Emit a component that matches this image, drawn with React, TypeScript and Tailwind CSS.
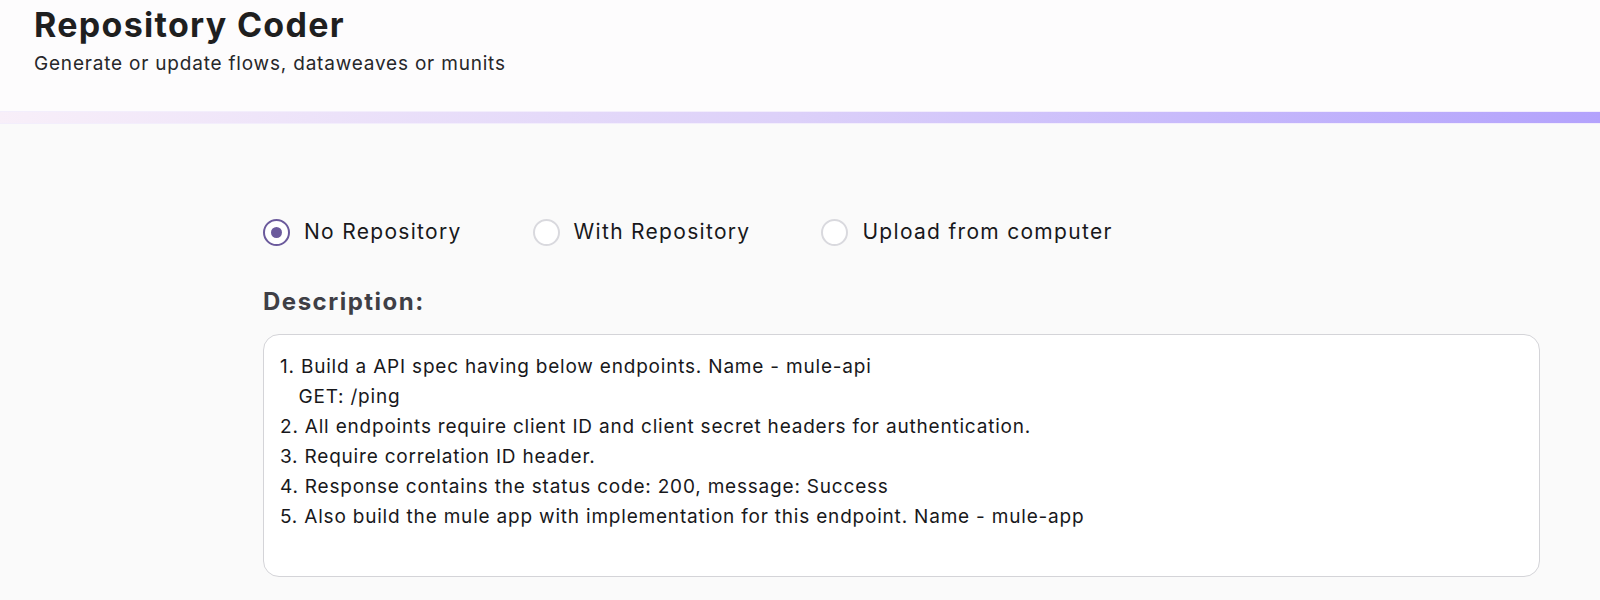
import React, { useState } from 'react';

const options = [
  { id: 'none', label: 'No Repository' },
  { id: 'repo', label: 'With Repository' },
  { id: 'upload', label: 'Upload from computer' },
];

const defaultDescription = `1. Build a API spec having below endpoints. Name - mule-api
   GET: /ping
2. All endpoints require client ID and client secret headers for authentication.
3. Require correlation ID header.
4. Response contains the status code: 200, message: Success
5. Also build the mule app with implementation for this endpoint. Name - mule-app`;

const App = () => {
  const [mode, setMode] = useState('none');
  const [description, setDescription] = useState(defaultDescription);

  return (
    <div className="min-h-screen bg-[#fafafa] text-[#18181b] font-['Inter','Noto_Sans',sans-serif]">
      {/* Header */}
      <div className="bg-[#fdfcfd] px-[34px] pt-[2px] h-[111px]">
        <h1 className="text-[34px] leading-[45px] font-bold tracking-[1.3px] text-[#1f1f1f]">
          Repository Coder
        </h1>
        <p className="mt-[4px] text-[19px] leading-[26px] tracking-[0.8px] text-[#27272a]">
          Generate or update flows, dataweaves or munits
        </p>
      </div>
      <div className="h-[13px] bg-gradient-to-r from-[#f8eff9] via-[#dcd0f9] to-[#b3a2fc] border-y border-[#f3eefc]" />

      {/* Content */}
      <div className="pl-[263px] pr-[60px] pt-[94px]">
        <div className="flex items-center gap-[71px]">
          {options.map((opt) => {
            const active = mode === opt.id;
            return (
              <label
                key={opt.id}
                className="flex items-center gap-[14px] cursor-pointer"
                onClick={() => setMode(opt.id)}
              >
                <span
                  className={`w-[27px] h-[27px] rounded-full border-[2.5px] flex items-center justify-center bg-white ${
                    active ? 'border-[#6b5a9c]' : 'border-[#d9d9de]'
                  }`}
                >
                  {active && <span className="w-[11px] h-[11px] rounded-full bg-[#6b5a9c]" />}
                </span>
                <span className="text-[21px] leading-[28px] tracking-[1.3px] text-[#18181b]">{opt.label}</span>
              </label>
            );
          })}
        </div>

        <h2 className="mt-[40px] text-[24px] leading-[32px] font-bold tracking-[1.5px] text-[#3f3f46]">
          Description:
        </h2>

        <textarea
          value={description}
          onChange={(e) => setDescription(e.target.value)}
          className="mt-[16px] block w-full h-[243px] resize-none rounded-[16px] border-[1.5px] border-[#d4d4d8] bg-white px-[16px] pt-[17px] pb-[14px] text-[19px] leading-[30px] tracking-[0.8px] text-[#18181b] outline-none font-['Inter','Noto_Sans',sans-serif]"
        />
      </div>
    </div>
  );
};

export default App;
